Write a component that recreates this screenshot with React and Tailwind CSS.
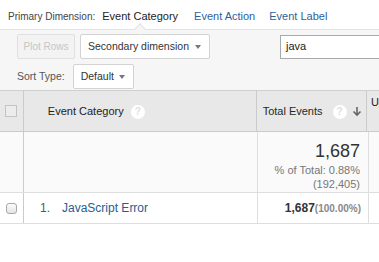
import React from 'react';

const HelpIcon = () => (
  <span className="inline-flex items-center justify-center w-[14px] h-[14px] rounded-full bg-white text-[#e0e0e0] text-[10px] font-bold leading-none">
    ?
  </span>
);

const Caret = () => (
  <span className="inline-block w-0 h-0 border-l-[3px] border-r-[3px] border-t-[4px] border-l-transparent border-r-transparent border-t-[#777]" />
);

const App = () => {
  return (
    <div className="w-[379px] h-[262px] bg-white overflow-hidden text-[#333]" style={{ fontFamily: '"Liberation Sans", Arial, sans-serif' }}>
      {/* dimension switcher */}
      <div className="h-[29px] flex items-center pl-[8px] text-[11px] pt-[4px]">
        <span className="text-[10px] text-[#444]">Primary Dimension:</span>
        <span className="ml-[7px] text-[#222]">Event Category</span>
        <span className="ml-[16px] text-[#2d5f9a]">Event Action</span>
        <span className="ml-[14px] text-[#2d5f9a]">Event Label</span>
      </div>

      {/* toolbar */}
      <div className="relative h-[61px] border-t border-[#e2e2e2] bg-[#f6f6f6] pl-[17px] pt-[4px]">
        <div className="absolute -top-[5px] left-[136px] w-[8px] h-[8px] rotate-45 border-l border-t border-[#e2e2e2] bg-[#f6f6f6]" />
        <div className="flex items-center">
          <button className="h-[25px] w-[58px] rounded-[2px] border border-[#e0e0e0] bg-[#f3f3f3] text-[10px] text-[#c6c6c6]">
            Plot Rows
          </button>
          <button className="ml-[5px] h-[25px] w-[130px] rounded-[2px] border border-[#d3d3d3] bg-white flex items-center justify-between pl-[7px] pr-[8px] text-[10.5px] text-[#333]">
            <span>Secondary dimension</span>
            <Caret />
          </button>
          <div className="ml-[70px] h-[24px] flex-1 border border-[#a9a9a9] border-r-0 bg-white flex items-center pl-[5px] text-[11px] text-[#222]">
            java
          </div>
        </div>
        <div className="mt-[5px] flex items-center">
          <span className="text-[10.5px] text-[#555]">Sort Type:</span>
          <button className="ml-[8px] h-[25px] w-[61px] rounded-[2px] border border-[#d3d3d3] bg-white flex items-center justify-between pl-[7px] pr-[8px] text-[10.5px] text-[#333]">
            <span>Default</span>
            <Caret />
          </button>
        </div>
      </div>

      {/* table */}
      <div className="border-t border-[#cfcfcf]">
        {/* header */}
        <div className="flex h-[41px] bg-[#e8e8e8] border-b border-[#cbcbcb]">
          <div className="w-[24px] border-r border-[#cbcbcb] flex items-center justify-center">
            <span className="w-[12px] h-[12px] border border-[#c4c4c4] bg-[#ececec]" />
          </div>
          <div className="w-[234px] border-r border-[#cbcbcb] flex items-center pl-[24px] text-[11px] text-[#222]">
            <span>Event Category</span>
            <span className="ml-[7px]"><HelpIcon /></span>
          </div>
          <div className="w-[111px] border-r border-[#cbcbcb] flex items-center pl-[6px] pr-[4px] text-[11px] text-[#1f2a1f]">
            <span>Total Events</span>
            <span className="ml-[10px]"><HelpIcon /></span>
            <svg className="ml-auto" width="10" height="11" viewBox="0 0 10 11">
              <path d="M5 1v8M1.5 5.5L5 9l3.5-3.5" fill="none" stroke="#666" strokeWidth="1.6" />
            </svg>
          </div>
          <div className="flex-1 pl-[4px] pt-[6px] text-[11px] text-[#222] leading-none">U</div>
        </div>

        {/* summary row */}
        <div className="flex h-[61px] bg-[#fafafa] border-b border-[#dedede]">
          <div className="w-[24px] border-r border-[#cbcbcb]" />
          <div className="w-[234px] border-r border-[#dedede]" />
          <div className="w-[111px] border-r border-[#dedede] flex flex-col items-end pr-[8px] pt-[8px]">
            <span className="text-[18px] leading-[22px] text-[#333]">1,687</span>
            <span className="text-[11px] leading-[14px] text-[#777] mt-[1px]">% of Total: 0.88%</span>
            <span className="text-[11px] leading-[14px] text-[#777]">(192,405)</span>
          </div>
          <div className="flex-1" />
        </div>

        {/* data row */}
        <div className="flex h-[31px] bg-white border-b border-[#dedede]">
          <div className="w-[24px] border-r border-[#cbcbcb] flex items-center justify-center">
            <span className="w-[11px] h-[11px] rounded-[3px] border border-[#a8a8a8] bg-gradient-to-b from-[#fcfcfc] to-[#e4e4e4]" />
          </div>
          <div className="w-[234px] border-r border-[#dedede] flex items-center pl-[16px] text-[12px]">
            <span className="text-[#555]">1.</span>
            <span className="ml-[12px] text-[#2a5d8f]">JavaScript Error</span>
          </div>
          <div className="w-[111px] border-r border-[#dedede] flex items-center justify-end pr-[7px]">
            <span className="text-[12px] font-bold text-[#333]">1,687</span>
            <span className="text-[10px] font-bold text-[#888]">(100.00%)</span>
          </div>
          <div className="flex-1" />
        </div>
      </div>
    </div>
  );
};

export default App;
